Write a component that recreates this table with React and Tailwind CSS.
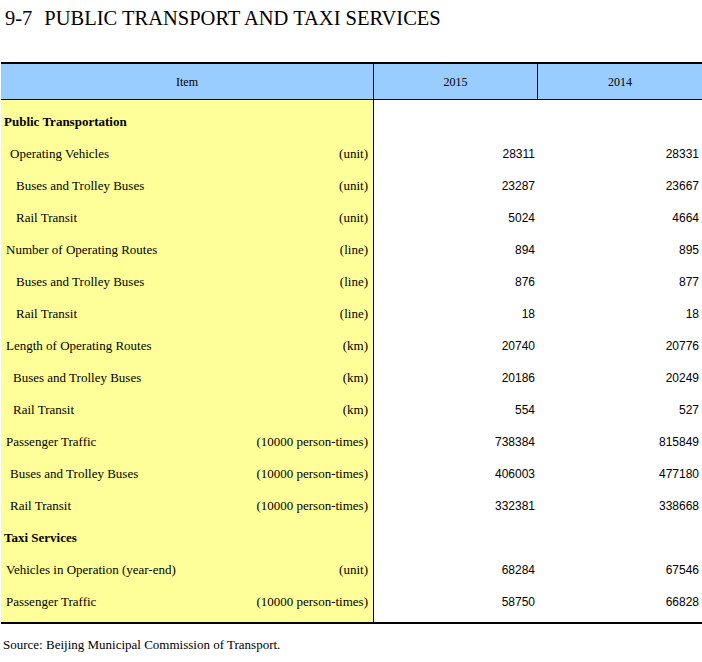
import React from "react";

const rows = [
  { label: "Public Transportation", bold: true, pl: "pl-[3px]" },
  { label: "Operating Vehicles", unit: "(unit)", pl: "pl-[9px]", a: "28311", b: "28331" },
  { label: "Buses and Trolley Buses", unit: "(unit)", pl: "pl-[15px]", a: "23287", b: "23667" },
  { label: "Rail Transit", unit: "(unit)", pl: "pl-[15px]", a: "5024", b: "4664" },
  { label: "Number of Operating Routes", unit: "(line)", pl: "pl-[5px]", a: "894", b: "895" },
  { label: "Buses and Trolley Buses", unit: "(line)", pl: "pl-[15px]", a: "876", b: "877" },
  { label: "Rail Transit", unit: "(line)", pl: "pl-[15px]", a: "18", b: "18" },
  { label: "Length of Operating Routes", unit: "(km)", pl: "pl-[5px]", a: "20740", b: "20776" },
  { label: "Buses and Trolley Buses", unit: "(km)", pl: "pl-[12px]", a: "20186", b: "20249" },
  { label: "Rail Transit", unit: "(km)", pl: "pl-[12px]", a: "554", b: "527" },
  { label: "Passenger Traffic", unit: "(10000 person-times)", pl: "pl-[5px]", a: "738384", b: "815849" },
  { label: "Buses and Trolley Buses", unit: "(10000 person-times)", pl: "pl-[9px]", a: "406003", b: "477180" },
  { label: "Rail Transit", unit: "(10000 person-times)", pl: "pl-[9px]", a: "332381", b: "338668" },
  { label: "Taxi Services", bold: true, pl: "pl-[3px]" },
  { label: "Vehicles in Operation (year-end)", unit: "(unit)", pl: "pl-[5px]", a: "68284", b: "67546" },
  { label: "Passenger Traffic", unit: "(10000 person-times)", pl: "pl-[5px]", a: "58750", b: "66828" },
];

export default function App() {
  return (
    <div className="w-[702px] h-[662px] bg-white text-black font-['Liberation_Serif',serif] overflow-hidden">
      <h1 className="pt-[7px] pl-[5px] text-[20.5px] leading-[23px] whitespace-nowrap font-normal">
        <span>9-7</span>
        <span className="ml-[12px]">PUBLIC TRANSPORT AND TAXI SERVICES</span>
      </h1>
      <div className="mt-[32px] ml-[1px] border-t-2 border-b-2 border-black">
        <div className="grid grid-cols-[373px_164px_164px] h-[36px] bg-[#99ccff] border-b border-black text-[12px]">
          <div className="flex items-center justify-center border-r border-black">Item</div>
          <div className="flex items-center justify-center border-r border-black">2015</div>
          <div className="flex items-center justify-center">2014</div>
        </div>
        <div className="grid grid-cols-[373px_164px_164px]">
          <div className="flex flex-col bg-[#ffff99] border-r border-black pt-[6px] pb-[4px] text-[13px]">
            {rows.map((r, i) => (
              <div key={i} className={`flex items-center justify-between h-[32px] pr-[5px] ${r.pl}`}>
                <span className={r.bold ? "font-bold" : ""}>{r.label}</span>
                {r.unit && <span>{r.unit}</span>}
              </div>
            ))}
          </div>
          <div className="flex flex-col pt-[6px] pb-[4px] text-[12px] font-['Liberation_Sans',sans-serif]">
            {rows.map((r, i) => (
              <div key={i} className="flex items-center justify-end h-[32px] pr-[3px]">
                {r.a || ""}
              </div>
            ))}
          </div>
          <div className="flex flex-col pt-[6px] pb-[4px] text-[12px] font-['Liberation_Sans',sans-serif]">
            {rows.map((r, i) => (
              <div key={i} className="flex items-center justify-end h-[32px] pr-[3px]">
                {r.b || ""}
              </div>
            ))}
          </div>
        </div>
      </div>
      <p className="mt-[13px] pl-[3px] text-[13px] leading-[15px]">
        Source: Beijing Municipal Commission of Transport.
      </p>
    </div>
  );
}
